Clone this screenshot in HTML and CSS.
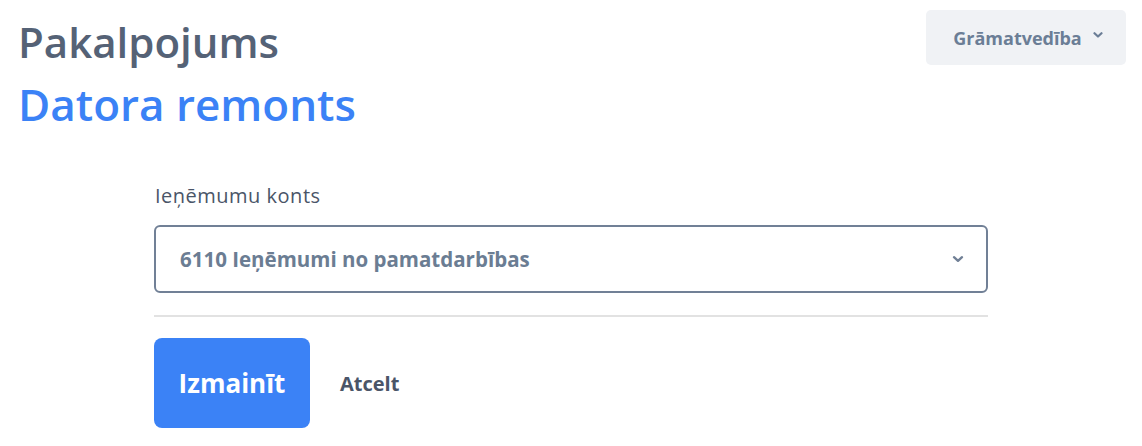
FILE: index.html
```html
<!DOCTYPE html>
<html lang="lv">
<head>
<meta charset="utf-8">
<title>Pakalpojums</title>
<link rel="stylesheet" href="styles.css">
</head>
<body>
<header class="header">
  <div class="titles">
    <h1 class="title">Pakalpojums</h1>
    <h2 class="subtitle">Datora remonts</h2>
  </div>
  <button class="menu-btn" type="button">Grāmatvedība
    <svg class="menu-chevron" width="10" height="8" viewBox="0 0 10 8"><path d="M1.5 2.2 L5 5.5 L8.5 2.2" fill="none" stroke="currentColor" stroke-width="2.2" stroke-linecap="round" stroke-linejoin="round"/></svg>
  </button>
</header>
<main class="form">
  <label class="label">Ieņēmumu konts</label>
  <div class="select">
    <span class="select-value">6110 Ieņēmumi no pamatdarbības</span>
    <svg class="select-chevron" width="12" height="8" viewBox="0 0 12 8"><path d="M2 2.2 L6 5.8 L10 2.2" fill="none" stroke="currentColor" stroke-width="2.4" stroke-linecap="round" stroke-linejoin="round"/></svg>
  </div>
  <hr class="divider">
  <div class="actions">
    <button class="btn-primary" type="button">Izmainīt</button>
    <button class="btn-link" type="button">Atcelt</button>
  </div>
</main>
</body>
</html>
```
FILE: styles.css
```css
* { box-sizing: border-box; }
body {
  margin: 0;
  font-family: "Open Sans", "Noto Sans", sans-serif;
  background: #ffffff;
}
.header {
  display: flex;
  justify-content: space-between;
  align-items: flex-start;
  padding: 0 16px 0 18px;
}
.titles { padding-top: 17px; }
.title {
  margin: 0;
  font-size: 42px;
  line-height: 50px;
  font-weight: 600;
  color: #556276;
}
.subtitle {
  margin: 11px 0 0;
  font-size: 44px;
  line-height: 52px;
  font-weight: 600;
  color: #3b82f6;
}
.menu-btn {
  margin-top: 10px;
  width: 200px;
  height: 55px;
  border: 0;
  border-radius: 5px;
  background: #f0f2f5;
  color: #6b7e96;
  font-family: inherit;
  font-size: 18px;
  font-weight: 700;
  display: flex;
  align-items: center;
  justify-content: center;
  gap: 11px;
  padding: 0 0 0 4px;
}
.menu-chevron { margin-top: -6px; }
.form {
  width: 834px;
  margin: 54px 0 0 154px;
  display: flex;
  flex-direction: column;
}
.label {
  font-size: 20px;
  line-height: 24px;
  letter-spacing: 0.5px;
  color: #4a5568;
  padding-left: 1px;
}
.select {
  margin-top: 17px;
  height: 68px;
  border: 2px solid #718096;
  border-radius: 6px;
  display: flex;
  align-items: center;
  justify-content: space-between;
  padding: 0 22px 0 24px;
}
.select-value {
  font-size: 20.5px;
  font-weight: 700;
  color: #6b7d93;
}
.select-chevron { color: #718096; }
.divider {
  margin: 22px 0 0;
  border: 0;
  height: 2px;
  background: #e2e2e2;
}
.actions {
  margin-top: 21px;
  display: flex;
  align-items: center;
  gap: 30px;
}
.btn-primary {
  width: 156px;
  height: 90px;
  border: 0;
  border-radius: 8px;
  background: #3b82f6;
  color: #ffffff;
  font-family: inherit;
  font-size: 26px;
  font-weight: 700;
}
.btn-link {
  border: 0;
  background: none;
  padding: 0;
  font-family: inherit;
  font-size: 20px;
  font-weight: 700;
  color: #4a5568;
}
```
